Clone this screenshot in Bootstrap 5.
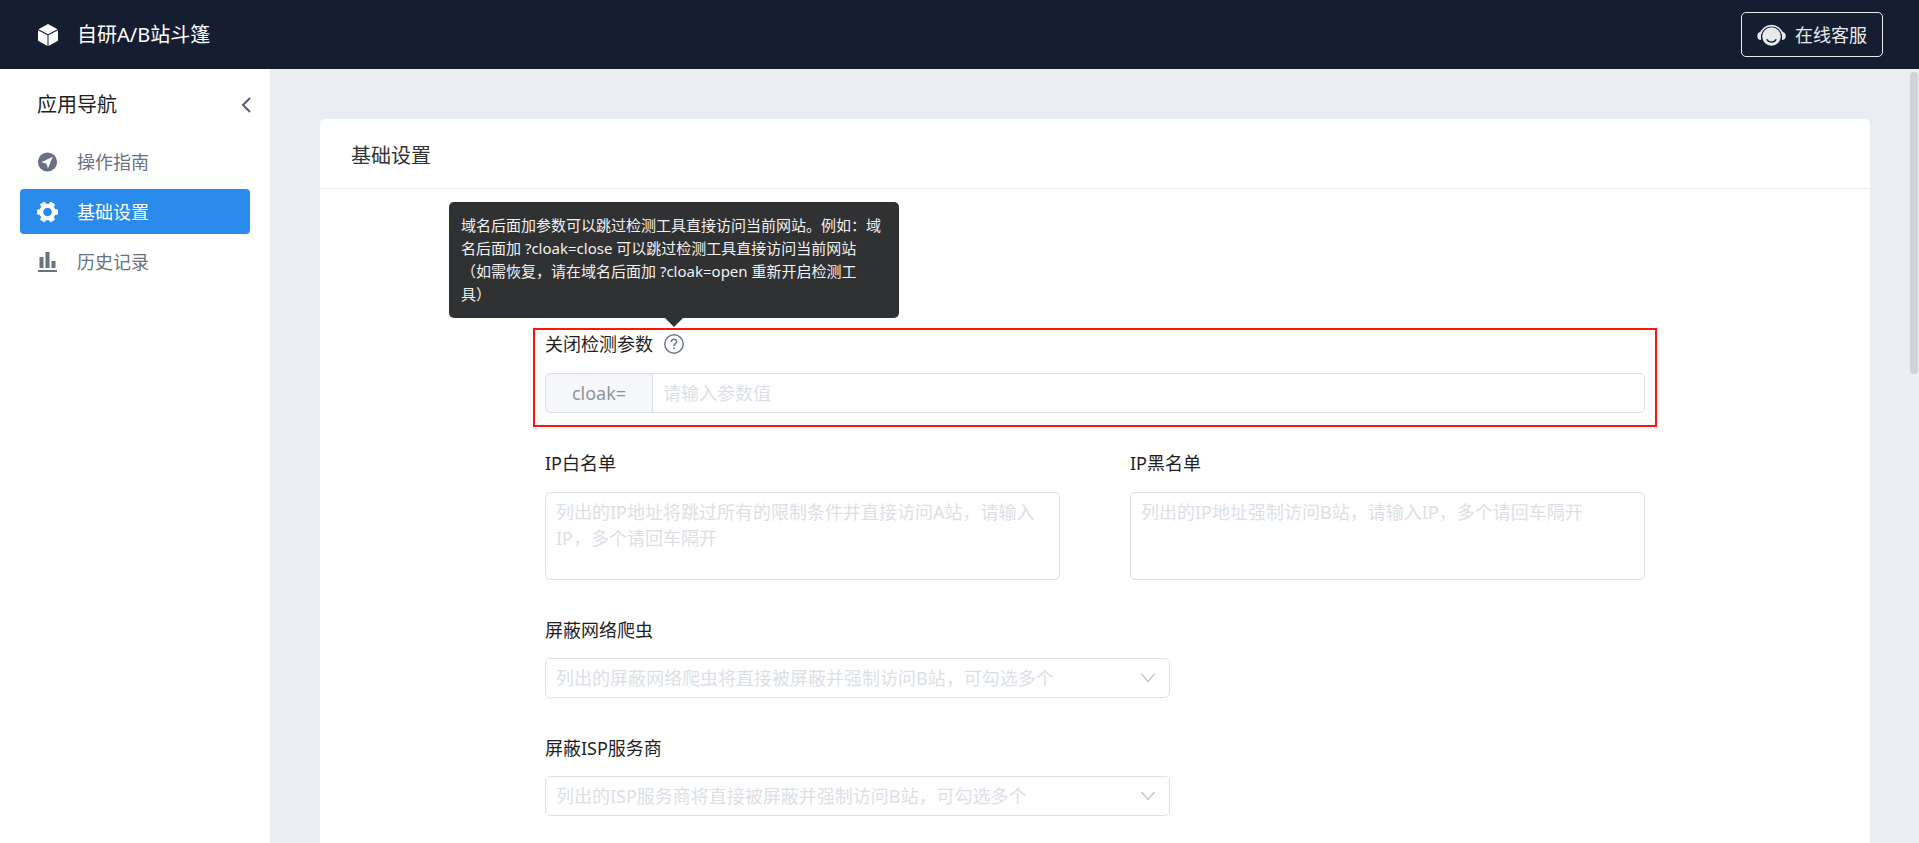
<!DOCTYPE html>
<html lang="zh-CN">
<head>
<meta charset="utf-8">
<meta name="viewport" content="width=device-width, initial-scale=1">
<title>自研A/B站斗篷</title>
<link href="https://cdn.jsdelivr.net/npm/bootstrap@5.3.0/dist/css/bootstrap.min.css" rel="stylesheet">
<style>
  body { font-family: "Noto Sans", "Noto Sans CJK SC", sans-serif; font-size: 18px; line-height: 26px; background: #eaedf2; color: #1f1f1f; }
  .topbar { height: 69px; background: #151d31; padding: 0 36px 0 37px; }
  .brand { font-size: 20px; gap: 18px; }
  .service-btn { height: 45px; padding: 0 15px; gap: 9px; border: 1px solid #e8eaec; border-radius: 5px; color: #e8eaec; font-size: 18px; line-height: 26px; }
  .service-btn:hover { border-color: #fff; color: #fff; background: #222b42; }
  .sidebar { width: 270px; }
  .sidebar-head { height: 70px; padding: 2px 17px 0 37px; font-size: 20px; }
  .side-link { height: 45px; padding: 0 17px; gap: 19px; border-radius: 4px; color: #6a7180; }
  .side-link.active { background: #2a8bec; color: #fff; }
  .side-list { gap: 5px; padding: 0 20px; }
  .page { padding: 50px 49px 50px 50px; scrollbar-width: none; }
  .page::-webkit-scrollbar { display: none; }
  .panel { border-radius: 5px; }
  .panel-head { height: 70px; padding: 4px 31px 0; border-bottom: 1px solid #ebecee; font-size: 20px; font-weight: 400; color: #333; }
  .settings { width: 80%; padding: 142px 70px 60px; gap: 37px; }
  .settings .row { --bs-gutter-x: 70px; }
  .field-label { display: block; margin-bottom: 16px; line-height: 26px; }
  .field { border: 1px solid #dcdfe6; border-radius: 5px; font-size: 18px; line-height: 26px; color: #606266; padding: 5px 10px; box-shadow: none; }
  .field::placeholder { color: #dcdfe6; opacity: 1; }
  .one-line { height: 40px; }
  textarea.field { height: 88px; resize: none; padding: 6px 10px; }
  .prefix { width: 108px; justify-content: center; background: #f5f7fa; border: 1px solid #dcdfe6; border-radius: 5px; color: #909399; font-size: 18px; line-height: 26px; padding: 0; }
  .select-col { width: 625px; max-width: 100%; }
  .select-col .field-label { margin-bottom: 15px; }
  select.field { color: #dcdfe6; padding: 5px 40px 5px 10px; background-size: 16px 16px; background-position: right 13px center;
    background-image: url("data:image/svg+xml,%3Csvg xmlns='http://www.w3.org/2000/svg' viewBox='0 0 16 16'%3E%3Cpath d='M1.500 4 8 11.500l6.500-7.500' fill='none' stroke='%23c0c4cc' stroke-width='1.300'/%3E%3C/svg%3E"); }
  .highlight { position: absolute; inset: -3px -12px -14px -12px; border: 2px solid #ff1212; pointer-events: none; }
  .help { width: 20px; height: 20px; margin-left: 11px; color: #6f7889; }
  .tip { position: absolute; left: 50%; bottom: calc(100% + 16px); transform: translateX(-50%); width: 450px; padding: 12px; background: #303133; color: #f2f2f2; border-radius: 5px; font-size: 15px; line-height: 23px; text-align: left; text-spacing-trim: space-all; }
  .tip::after { content: ""; position: absolute; top: 100%; left: 50%; margin-left: -9px; border: 9px solid transparent; border-bottom: 0; border-top-color: #303133; }
  .thumb { position: absolute; right: 1px; top: 3px; width: 8px; height: 39%; border-radius: 4px; background: #cfd2d6; }
</style>
</head>
<body class="vh-100 d-flex flex-column overflow-hidden">
<header class="topbar d-flex align-items-center justify-content-between flex-shrink-0">
  <a href="#" class="brand d-flex align-items-center text-white text-decoration-none">
    <svg width="22" height="22" viewBox="0 0 22 22" fill="#fff"><path d="M11 0 20.500 5.200 11 10.200 1.500 5.200zM1 6.300 10.500 11.200V22L1 16.800zM21 6.300 11.500 11.200V22L21 16.800z"/></svg>
    <span>自研A/B站斗篷</span>
  </a>
  <button type="button" class="service-btn btn d-flex align-items-center">
    <svg width="29" height="24" viewBox="0 0 29 24"><circle cx="14.500" cy="13.500" r="9.300" fill="#e8eaec"/><path d="M3.300 11.500a11.500 11.500 0 0 1 22.400 0" fill="none" stroke="#e8eaec" stroke-width="1.600"/><path d="M4 9v8C1.500 17 .300 15.500 .300 13S1.500 9 4 9zM25 9v8c2.500 0 3.700-1.500 3.700-4S27.500 9 25 9z" fill="#e8eaec"/><path d="M9.800 16.200c1.800 3.800 7.600 3.800 9.400 0" fill="none" stroke="#151d31" stroke-width="1.300"/></svg>
    <span>在线客服</span>
  </button>
</header>
<div class="d-flex flex-grow-1 overflow-hidden position-relative">
  <aside class="sidebar bg-white flex-shrink-0">
    <div class="sidebar-head d-flex align-items-center justify-content-between">
      <span>应用导航</span>
      <button type="button" class="btn p-0 border-0 d-flex" aria-label="收起">
        <svg width="14" height="18" viewBox="0 0 14 18" fill="none" stroke="#5b5776" stroke-width="2"><path d="M11 2 4 9l7 7"/></svg>
      </button>
    </div>
    <nav class="side-list nav flex-column">
      <a href="#" class="side-link d-flex align-items-center text-decoration-none">
        <svg width="21" height="20" viewBox="0 0 21 20"><circle cx="10.500" cy="10" r="9.600" fill="#6a7180"/><path d="M15.800 4.800 4.300 10.200l5 1.300L11 16.200z" fill="#fff"/></svg>
        <span>操作指南</span>
      </a>
      <a href="#" class="side-link active d-flex align-items-center text-decoration-none" aria-current="page">
        <svg width="21" height="20" viewBox="-10.500 -10 21 20" fill="#fff"><circle r="6.300" fill="none" stroke="#fff" stroke-width="4"/><rect id="tooth" x="6.500" y="-2.800" width="4" height="5.600" rx="1"/><use href="#tooth" transform="rotate(60)"/><use href="#tooth" transform="rotate(120)"/><use href="#tooth" transform="rotate(180)"/><use href="#tooth" transform="rotate(240)"/><use href="#tooth" transform="rotate(300)"/></svg>
        <span>基础设置</span>
      </a>
      <a href="#" class="side-link d-flex align-items-center text-decoration-none">
        <svg width="21" height="20" viewBox="0 0 21 20" fill="#6a7180"><path d="M2.500 5h4v11h-4zM8.500 0h4v16h-4zM14.500 9h4v7h-4zM1 18h19v2H1z"/></svg>
        <span>历史记录</span>
      </a>
    </nav>
  </aside>
  <main class="page flex-grow-1 overflow-auto">
    <section class="panel bg-white">
      <h1 class="panel-head d-flex align-items-center m-0">基础设置</h1>
      <form class="settings d-flex flex-column mx-auto">
        <div class="position-relative">
          <div class="d-flex align-items-center mb-3">
            <label for="cloak" class="field-label mb-0">关闭检测参数</label>
            <button type="button" class="help btn p-0 border-0 d-flex position-relative" aria-describedby="cloak-tip" aria-label="说明">
              <svg width="20" height="20" viewBox="0 0 20 20" fill="none" stroke="currentColor" stroke-width="1.500"><circle cx="10" cy="10" r="9.200"/><path d="M7.300 8c0-3.600 5.400-3.400 5.400-.4 0 2-2.700 2-2.700 4.400M10 13.500v1.700"/></svg>
              <span id="cloak-tip" class="tip" role="tooltip">域名后面加参数可以跳过检测工具直接访问当前网站。例如：域名后面加 ?cloak=close 可以跳过检测工具直接访问当前网站<br>（如需恢复，请在域名后面加 ?cloak=open 重新开启检测工<br>具）</span>
            </button>
          </div>
          <div class="input-group">
            <span class="input-group-text prefix">cloak=</span>
            <input id="cloak" type="text" class="form-control field one-line" placeholder="请输入参数值">
          </div>
          <div class="highlight"></div>
        </div>
        <div class="row">
          <div class="col-6">
            <label for="white" class="field-label">IP白名单</label>
            <textarea id="white" class="form-control field" placeholder="列出的IP地址将跳过所有的限制条件并直接访问A站，请输入IP，多个请回车隔开"></textarea>
          </div>
          <div class="col-6">
            <label for="black" class="field-label">IP黑名单</label>
            <textarea id="black" class="form-control field" placeholder="列出的IP地址强制访问B站，请输入IP，多个请回车隔开"></textarea>
          </div>
        </div>
        <div class="select-col">
          <label for="crawler" class="field-label">屏蔽网络爬虫</label>
          <select id="crawler" class="form-select field one-line"><option>列出的屏蔽网络爬虫将直接被屏蔽并强制访问B站，可勾选多个</option></select>
        </div>
        <div class="select-col">
          <label for="isp" class="field-label">屏蔽ISP服务商</label>
          <select id="isp" class="form-select field one-line"><option>列出的ISP服务商将直接被屏蔽并强制访问B站，可勾选多个</option></select>
        </div>
      </form>
    </section>
  </main>
  <div class="thumb"></div>
</div>
<script src="https://cdn.jsdelivr.net/npm/bootstrap@5.3.0/dist/js/bootstrap.bundle.min.js"></script>
</body>
</html>
